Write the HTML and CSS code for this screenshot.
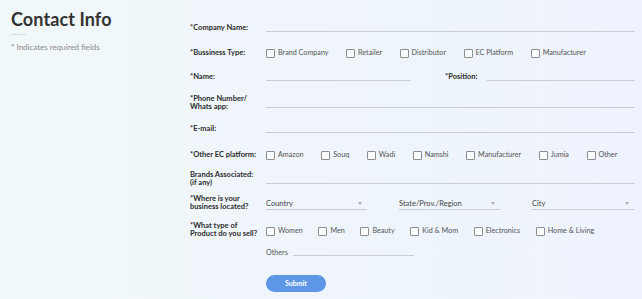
FILE: index.html
```html
<!DOCTYPE html>
<html lang="en">
<head>
<meta charset="utf-8">
<title>Contact Info</title>
<link rel="stylesheet" href="styles.css">
</head>
<body>
<div class="page">
  <aside class="intro">
    <h1 class="title">Contact Info</h1>
    <div class="rule"></div>
    <p class="note">* Indicates required fields</p>
  </aside>
  <form class="form">
    <div class="row r1">
      <label class="lbl">*Company Name:</label>
      <div class="line"></div>
    </div>
    <div class="row r2">
      <label class="lbl">*Bussiness Type:</label>
      <div class="checks">
        <span class="chk"><i class="box"></i>Brand Company</span>
        <span class="chk"><i class="box"></i>Retailer</span>
        <span class="chk"><i class="box"></i>Distributor</span>
        <span class="chk"><i class="box"></i>EC Platform</span>
        <span class="chk"><i class="box"></i>Manufacturer</span>
      </div>
    </div>
    <div class="row r3">
      <label class="lbl">*Name:</label>
      <div class="split">
        <div class="line name"></div>
        <label class="lbl pos">*Position:</label>
        <div class="line grow"></div>
      </div>
    </div>
    <div class="row r4">
      <label class="lbl two">*Phone Number/<br>Whats app:</label>
      <div class="line"></div>
    </div>
    <div class="row r5">
      <label class="lbl">*E-mail:</label>
      <div class="line"></div>
    </div>
    <div class="row r6">
      <label class="lbl">*Other EC platform:</label>
      <div class="checks ec">
        <span class="chk"><i class="box"></i>Amazon</span>
        <span class="chk"><i class="box"></i>Souq</span>
        <span class="chk"><i class="box"></i>Wadi</span>
        <span class="chk"><i class="box"></i>Namshi</span>
        <span class="chk"><i class="box"></i>Manufacturer</span>
        <span class="chk"><i class="box"></i>Jumia</span>
        <span class="chk"><i class="box"></i>Other</span>
      </div>
    </div>
    <div class="row r7">
      <label class="lbl two">Brands Associated:<br>(if any)</label>
      <div class="line"></div>
    </div>
    <div class="row r8">
      <label class="lbl two loc">*Where is your<br>business located?</label>
      <div class="selects">
        <div class="select"><span>Country</span><i class="arrow"></i></div>
        <div class="select"><span>State/Prov./Region</span><i class="arrow"></i></div>
        <div class="select"><span>City</span><i class="arrow"></i></div>
      </div>
    </div>
    <div class="row r9">
      <label class="lbl two prod">*What type of<br>Product do you sell?</label>
      <div class="checks narrow">
        <span class="chk"><i class="box"></i>Women</span>
        <span class="chk"><i class="box"></i>Men</span>
        <span class="chk"><i class="box"></i>Beauty</span>
        <span class="chk"><i class="box"></i>Kid &amp; Mom</span>
        <span class="chk"><i class="box"></i>Electronics</span>
        <span class="chk"><i class="box"></i>Home &amp; Living</span>
      </div>
    </div>
    <div class="row r10">
      <span></span>
      <div class="others">
        <span class="opt">Others</span>
        <div class="line short"></div>
      </div>
    </div>
    <div class="row r11">
      <span></span>
      <div class="btnwrap"><button type="button" class="submit">Submit</button></div>
    </div>
  </form>
</div>
</body>
</html>
```

FILE: styles.css
```css
* { box-sizing: border-box; }
html, body { margin: 0; padding: 0; }
body {
  width: 642px;
  height: 299px;
  overflow: hidden;
  font-family: Lato, "Open Sans", Arial, sans-serif;
  background: linear-gradient(to right, #f1f8fa 0%, #eff5fb 50%, #eef3fd 100%);
  color: #333;
}
.page {
  display: grid;
  grid-template-columns: 190px 445px;
  height: 299px;
}
.intro { padding: 8px 0 0 11px; }
.title {
  margin: 0;
  font-size: 18px;
  font-weight: 700;
  line-height: 22px;
  color: #333;
  letter-spacing: 0.1px;
}
.rule {
  width: 15px;
  height: 1px;
  background: #dcdcdc;
  margin-top: 4px;
}
.note {
  margin: 7px 0 0;
  font-size: 8px;
  color: #8a8a8a;
  line-height: 10px;
}
.form { padding-top: 18px; display: flex; flex-direction: column; }
.row {
  display: grid;
  grid-template-columns: 76px 1fr;
  align-items: end;
}
.r1 { height: 15px; }
.r2 { height: 25px; }
.r3 { height: 24px; }
.r4 { height: 27px; }
.r5 { height: 25px; }
.r6 { height: 26px; }
.r7 { height: 25px; }
.r8 { height: 26px; }
.r9 { height: 30px; }
.r10 { height: 17px; }
.lbl {
  font-size: 7.5px;
  font-weight: 700;
  line-height: 8px;
  color: #2b2b2b;
  padding-bottom: 1px;
  white-space: nowrap;
}
.lbl.two {
  line-height: 8px;
  padding-bottom: 0;
  margin-bottom: -2px;
}
.lbl.loc { margin-bottom: 0; }
.lbl.prod { margin-bottom: 3px; }
.line {
  height: 0;
  border-bottom: 1px solid #c9ccd0;
  margin-bottom: 1px;
}
.checks {
  display: flex;
  gap: 17.5px;
  align-items: center;
  height: 10px;
}
.checks.ec { gap: 17.6px; }
.checks.narrow { gap: 15.6px; margin-bottom: 5px; }
.chk {
  display: flex;
  align-items: center;
  gap: 3px;
  font-size: 7.2px;
  line-height: 10px;
  color: #555;
  white-space: nowrap;
}
.box {
  display: block;
  width: 9px;
  height: 9px;
  border: 1px solid #8d8d8d;
  border-radius: 1px;
  background: #fbfcfd;
}
.split { display: flex; align-items: end; }
.name { width: 145px; }
.pos { margin-left: 34px; width: 42px; }
.grow { flex: 1; }
.selects {
  display: grid;
  grid-template-columns: 101px 101px 102px;
  column-gap: 32px;
}
.select {
  display: flex;
  justify-content: space-between;
  align-items: center;
  border-bottom: 1px solid #c9ccd0;
  height: 12px;
  margin-bottom: 1px;
  font-size: 7.5px;
  color: #444;
}
.arrow {
  display: block;
  width: 0; height: 0;
  border-left: 2.5px solid transparent;
  border-right: 2.5px solid transparent;
  border-top: 3px solid #aaa;
  margin-right: 5px;
}
.others { display: flex; align-items: end; }
.opt { font-size: 7.2px; color: #555; line-height: 10px; }
.short { width: 121px; margin-left: 5px; margin-bottom: 2px; }
.r11 { align-items: start; padding-top: 17px; }
.btnwrap { display: flex; }
.submit {
  display: block;
  width: 60px;
  height: 17px;
  border: none;
  border-radius: 9px;
  background: #5e97e6;
  color: #fff;
  font-family: Lato, "Open Sans", Arial, sans-serif;
  font-size: 7px;
  font-weight: 700;
  line-height: 17px;
  padding: 0;
}
```
